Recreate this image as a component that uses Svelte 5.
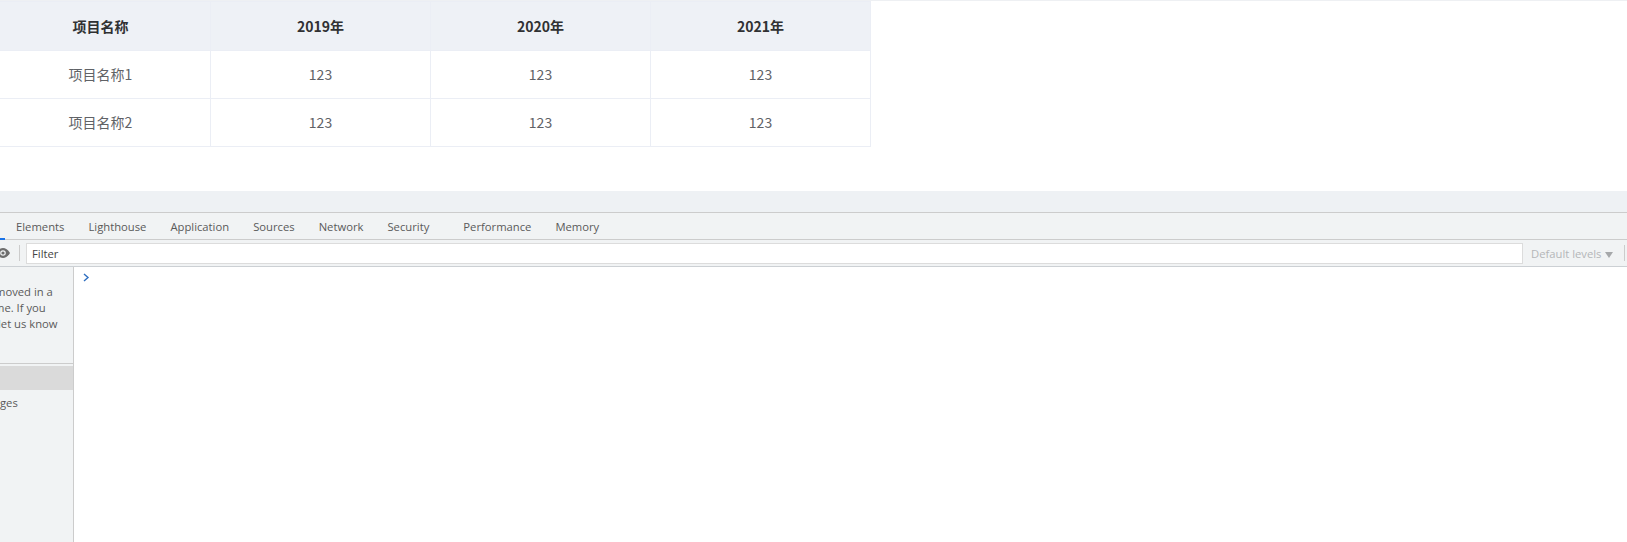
<script>
  const years = ['2019年', '2020年', '2021年'];
  const rows = ['项目名称1', '项目名称2'];
  const tabs = ['Elements', 'Lighthouse', 'Application', 'Sources', 'Network', 'Security', 'Performance', 'Memory'];
</script>

<div class="page">
  <section class="content">
    <table>
      <thead>
        <tr>
          <th>项目名称</th>
          {#each years as y}
            <th>{y}</th>
          {/each}
        </tr>
      </thead>
      <tbody>
        {#each rows as r}
          <tr>
            <td>{r}</td>
            {#each years as y}
              <td>123</td>
            {/each}
          </tr>
        {/each}
      </tbody>
    </table>
  </section>

  <div class="band"></div>

  <section class="devtools">
    <nav class="tabs">
      <span class="active-mark"></span>
      {#each tabs as t}
        <span class="tab" class:gap={t === 'Performance'}>{t}</span>
      {/each}
    </nav>

    <div class="toolbar">
      <svg class="eye" width="14" height="10" viewBox="0 0 14 10">
        <path d="M0 5C2 1.5 4.500 0 7 0s5 1.500 7 5c-2 3.500-4.500 5-7 5S2 8.500 0 5z" fill="#6e6e6e" />
        <circle cx="7" cy="5" r="2.800" fill="#f1f3f4" />
        <circle cx="7" cy="5" r="1.600" fill="#6e6e6e" />
      </svg>
      <span class="sep"></span>
      <div class="filter">Filter</div>
      <span class="levels">Default levels <i class="arrow"></i></span>
      <span class="sep last"></span>
    </div>

    <div class="main">
      <aside class="sidebar">
        <div class="notice">
          <div class="l1">moved in a</div>
          <div class="l2">me. If you</div>
          <div class="l3">let us know</div>
        </div>
        <div class="selected"></div>
        <div class="item">ges</div>
      </aside>
      <div class="console">
        <svg width="7" height="9" viewBox="0 0 7 9">
          <path d="M1 1l4 3.500L1 8" fill="none" stroke="#2f6fc0" stroke-width="1.400" />
        </svg>
      </div>
    </div>
  </section>
</div>

<style>
  :global(body) {
    margin: 0;
    background: #fff;
    overflow: hidden;
  }
  .page {
    height: 542px;
    display: flex;
    flex-direction: column;
    overflow: hidden;
  }
  .content {
    height: 191px;
    flex: none;
    box-sizing: border-box;
    border-top: 1px solid #eef0f3;
  }
  table {
    margin-left: -10px;
    width: 881px;
    table-layout: fixed;
    border-collapse: collapse;
    font-family: "Noto Sans CJK SC", sans-serif;
    font-size: 14px;
  }
  th,
  td {
    border: 1px solid #ebeef5;
    text-align: center;
    padding: 0;
    box-sizing: border-box;
  }
  th {
    height: 49px;
    background: #eef1f6;
    color: #303133;
    font-weight: 700;
  }
  td {
    height: 48px;
    color: #606266;
    padding-bottom: 2px;
  }
  .band {
    height: 21px;
    flex: none;
    background: #eef1f4;
  }
  .devtools {
    flex: 1;
    display: flex;
    flex-direction: column;
    min-height: 0;
    font-family: "Open Sans", sans-serif;
    font-size: 11.25px;
    color: #5a5a5a;
  }
  .tabs {
    position: relative;
    height: 26px;
    flex: none;
    display: flex;
    align-items: center;
    gap: 24px;
    padding-left: 16px;
    background: #f1f3f4;
    border-top: 1px solid #ccc;
    border-bottom: 1px solid #ccc;
  }
  .tab.gap {
    margin-left: 10px;
  }
  .active-mark {
    position: absolute;
    left: 0;
    bottom: -1px;
    width: 5px;
    height: 2px;
    background: #1a73e8;
  }
  .toolbar {
    height: 27px;
    flex: none;
    box-sizing: border-box;
    display: flex;
    align-items: center;
    background: #f1f3f4;
    border-bottom: 1px solid #ccd0d4;
  }
  .eye {
    margin-left: -4px;
    flex: none;
  }
  .sep {
    width: 1px;
    height: 16px;
    margin-left: 9px;
    background: #ccc;
    flex: none;
  }
  .filter {
    margin-left: 6px;
    width: 1497px;
    height: 21px;
    flex: none;
    box-sizing: border-box;
    border: 1px solid #dcdcdc;
    background: #fff;
    padding-left: 5px;
    line-height: 19px;
    color: #444;
  }
  .levels {
    margin-left: 8px;
    color: #b4b6b8;
    white-space: nowrap;
    flex: none;
  }
  .arrow {
    display: inline-block;
    width: 0;
    height: 0;
    margin-left: 1px;
    border-left: 4px solid transparent;
    border-right: 4px solid transparent;
    border-top: 6px solid #a6a8aa;
  }
  .sep.last {
    margin-left: 11px;
  }
  .main {
    flex: 1;
    display: flex;
    min-height: 0;
  }
  .sidebar {
    width: 74px;
    flex: none;
    box-sizing: border-box;
    background: #f1f3f4;
    border-right: 1px solid #ccc;
    overflow: hidden;
    white-space: nowrap;
  }
  .notice {
    height: 97px;
    box-sizing: border-box;
    padding-top: 17px;
    line-height: 16px;
    border-bottom: 1px solid #ccc;
  }
  .l1 {
    margin-left: -5px;
  }
  .l2 {
    margin-left: -6px;
  }
  .l3 {
    margin-left: -2px;
  }
  .selected {
    height: 24px;
    margin-top: 2px;
    background: #dadada;
  }
  .item {
    margin: 5px 0 0 0;
    line-height: 16px;
  }
  .console {
    flex: 1;
    background: #fff;
    padding: 6px 0 0 9px;
  }
  .console svg {
    display: block;
  }
</style>
